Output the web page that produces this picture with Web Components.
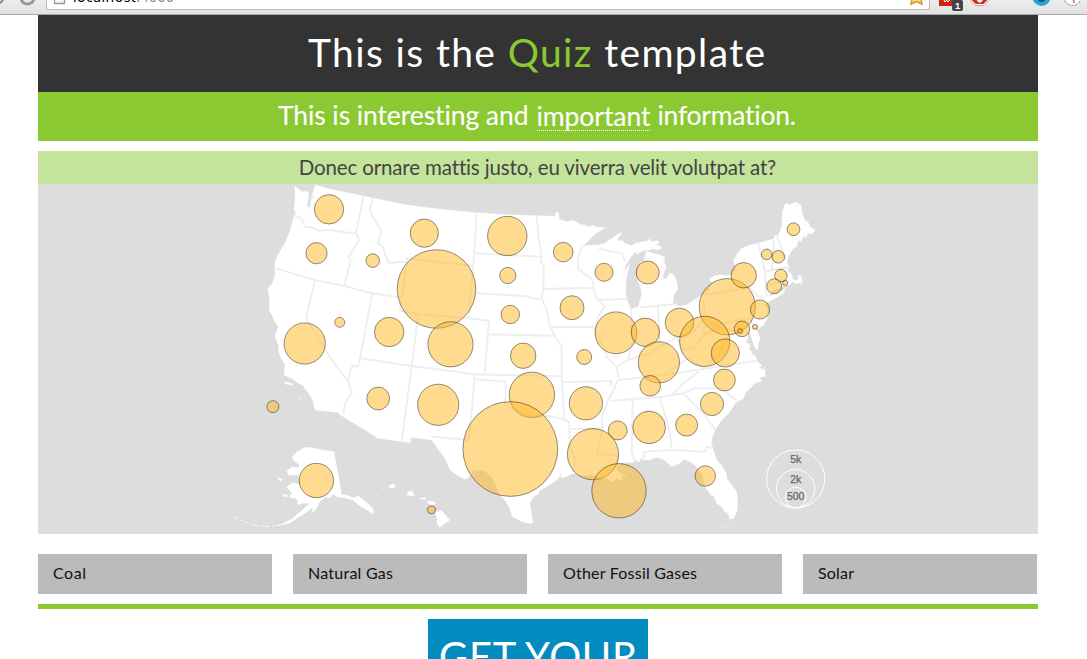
<!DOCTYPE html>
<html lang="en"><head><meta charset="utf-8"><title>Quiz template</title>
<style>html,body{margin:0;height:659px;overflow:hidden;background:#fff;font-family:Lato,"Open Sans",sans-serif;color:#111}</style></head>
<body><quiz-page></quiz-page>
<script>
const define=(name,html,ready)=>{customElements.define(name,class extends HTMLElement{
 constructor(){super();this.attachShadow({mode:'open'}).innerHTML=html;}
 connectedCallback(){if(ready)ready(this,this.shadowRoot);}
});};

// A single line of text whose tracking is set so that it fills the given width.
define('fit-text',`<style>:host{display:inline-block;white-space:pre}span{display:inline-block;white-space:pre}</style><span><slot></slot></span>`,(el,root)=>{
 const s=root.querySelector('span'),n=el.textContent.length,w=+el.getAttribute('width');
 const now=s.getBoundingClientRect().width,ls=(w-now)/(n-1);
 s.style.letterSpacing=ls+'px';s.style.marginRight=-ls+'px';
});

define('browser-bar',`<style>
:host{display:block;height:15px;overflow:hidden;background:linear-gradient(#ededed,#e1e1e1);border-bottom:1px solid #a9a9a9;box-sizing:border-box}
.row{display:flex;height:14px}
.nav{width:46px}.field{width:882px;height:9px;background:#fff;border:1px solid #bdbdbd;border-top:0;border-radius:0 0 3px 3px;display:flex;overflow:hidden;position:relative}
.url{position:absolute;left:26px;top:-13px;font:14px/20px "Noto Sans",sans-serif;color:#000}.url i{font-style:normal;color:#888}
svg{display:block}.tools{width:157px}
</style><div class="row">
<div class="nav"><svg width="46" height="14"><circle cx="-2" cy="-2" r="5" fill="none" stroke="#999" stroke-width="2.5"/><path d="M21.5-1a6 5 0 0 0 12 0" fill="none" stroke="#999" stroke-width="3"/></svg></div>
<div class="field"><svg width="24" height="9"><path d="M7.5-2v5.500h10V-2" fill="#f8f8f8" stroke="#999" stroke-width="1.300"/></svg><div class="url"><fit-text width="101">localhost<i>:4000</i></fit-text></div></div>
<div class="tools"><svg width="157" height="14" viewBox="930 0 157 14"><path d="M939 0h15v6h-15z" fill="#cf2318"/><path d="M944 0l1 2 2-2 1 2 2-2" stroke="#fff" fill="none"/><rect x="952" y="0" width="11" height="11" rx="2" fill="#444"/><text x="955" y="9" font-family="Liberation Sans" font-weight="bold" font-size="9.500" fill="#fff">1</text>
<path d="M970-3v3.500l5 5h9l5-5V-3z" fill="#fff" stroke="#999" stroke-width=".8"/><path d="M971.500-3v3l4 4h8l4-4v-3z" fill="#d92a22"/><path d="M976-1q3.500 7 7 1z" fill="#fff"/>
<circle cx="1041.500" cy="-3" r="9" fill="#21a9cf"/><circle cx="1041.500" cy="-2" r="4" fill="#124e68"/><circle cx="1072.500" cy="-3" r="8.500" fill="#fff" stroke="#6c93ca" stroke-dasharray="3 1"/><path d="M1073-1l1.500 4" stroke="#e36a2c" stroke-width="1.500"/></svg></div></div>
<svg class="star" style="position:absolute;left:908px;top:0" width="18" height="8"><path d="M2.500-2L4-1l-1 5.200 5.500-2.700L14 4.200 13-1l2-2" fill="#f9dc6b" stroke="#cf9430" stroke-width="1.400"/></svg>`);

define('quiz-title',`<style>:host{display:flex;justify-content:center;height:77px;background:#333;color:#fff;font-size:39px;line-height:75px;box-sizing:border-box;padding-right:3px}</style><slot></slot>`);
define('quiz-lead',`<style>:host{display:flex;justify-content:center;height:49px;background:#8ac932;color:#fff;font-size:26.500px;line-height:46px;padding-right:2px;-webkit-text-stroke:.1px #fff;box-sizing:border-box}</style><slot></slot>`);
define('quiz-question',`<style>:host{display:flex;justify-content:center;margin-top:10px;height:33px;background:#c4e39b;color:#444;font-size:20.500px;line-height:33px;padding-right:1px;box-sizing:border-box}</style><slot></slot>`);

// x, y, radius of every bubble, in map coordinates.
const bubbles=[[329,209.300,14.700],[316.500,253.200,10.600],[424.300,233.200,14.100],[372.700,260.600,6.800],[436.500,289,39.300],[507.300,236,19.700],[507.800,275.500,8.100],[563.200,252.100,9.800],[604,272.300,9],[647.700,272.500,11.500],[510.300,314.500,9.200],[572,307.700,12],[339.700,322.300,5],[304.700,343.500,20.600],[389.200,332,14.700],[450.500,344.300,22.600],[523.200,355.700,12.700],[584.200,357,7.500],[616,332.800,20.900],[645.300,332.300,14.200],[679.500,322.500,14.300],[727.300,306.700,28.100],[743.700,275.300,12.700],[704.700,341.300,25.100],[725.300,353,14.100],[658.900,362.300,20.600],[650.200,385.800,10.300],[724.400,380,10.900],[712,404,11.600],[686.600,425.100,11],[649.100,427.400,16.300],[617.700,430.400,9.500],[585.900,403.300,16.600],[531.900,394.800,22.700],[510.300,449,47.400],[593,454.200,25.600],[619,490.800,27.200],[705.300,476,10.200],[438.200,404.800,20.600],[378.200,398.500,11.400],[272.900,406.700,6],[316.400,480.500,17.200],[431.500,509.900,4],[793.500,229.300,6.400],[766.700,254.400,5.300],[778.300,256.800,6.300],[780.900,275.500,6.200],[774.200,286.300,7.500],[785.200,282.900,2.600],[760,309.500,9.600],[755,326.900,2.500],[742,328.900,7.800],[740.100,331,2.400]];
define('bubble-map',`<style>:host{display:block;height:350px;background:#ddd}svg{display:block}.land{fill:#fff;stroke:#fff;stroke-width:.4;stroke-linejoin:round}.border{fill:none;stroke:#eee;stroke-width:1.900;stroke-linejoin:round}.lake{fill:#ddd}.b circle{fill:#ffb721;fill-opacity:.5;stroke:#000;stroke-opacity:.42;stroke-width:1}.legend{fill:none;stroke:#fff}.isle{fill:none;stroke:#fff}text{font:10.500px "Liberation Sans",Arial,sans-serif;fill:#666;stroke:#666;stroke-width:.25px;text-anchor:middle}</style>
<svg width="1000" height="350" viewBox="38 184 1000 350">
<path class="land" d="M295 186L298 189 301.700 191.700 307 191.500 309 194 308 200 307 206 310 207 311 200 312 195 314 190 315.500 185 329 189 363.500 196 372.700 198 406.700 205 440 209.300 476.700 212.700 507 214.700 536.700 215.700 555.300 216.300 556 212 558.300 212.700 559.300 219.300 564 221 568.300 221.700 571 220.500 575 220.700 578 223 581.700 225 584 224.500 587 226.500 589.300 226.700 593.300 225.300 597 227 605 228 598 232 593 236 588 241 583.300 246 592 245 598.300 245 605 243.300 609 240 613.300 237.700 616 235 621.700 232.700 620 236 617 238 618.300 241 622 240.500 626 244 631.700 245.700 636 243 641.700 242.300 647 241 650 239 651 242 656 240.700 659 241 658 244 655 245 660 246 662 248.300 656.700 250 653 248.300 650 250 646 250 640 251.700 637 254 635 252 631.700 256 629 260 626.700 263.300 623.300 271 627 268 630 263.300 628 271 626.300 278 626 286.700 625.300 291 626.700 298.300 630 308.300 634 308.300 638.300 306.700 640 300 641.700 295 641 289 638 280 637.300 275 638 269 640 263 642 261 643 264 645 256.700 646.700 251 651 253 656.700 254 660 255 665 257.300 664 262 666 266.700 664 272 662.700 276.700 664 279 666.700 278.300 669 274 671.700 273.300 675 277 676.700 281.700 677.700 290 675 292 673.300 298.300 672.700 304 675 304 678.300 306 686.700 305 694 300 700 296.700 707 292 713 283.300 710 280.500 710 278.300 716 275.500 720 275 725 275.500 731.700 275 735 271 737 268 733.300 261.700 737 254 741.700 248.300 750 245 758.300 243.300 774 239 775 235 778 236 781.700 226.700 782 218 782.300 211.700 785.700 203.300 790 205 793 203 796.700 202.300 800.700 205 802 213 804.500 220 808 222 810 227 815.300 230 812 234 808 233 806 238 803 236 801 242 798 240 797 246 793.300 248.300 790 253 788.300 257 787 263 789 267 787.500 271 792 275 793 280 798 280 799 276 797 275 801 276 802 282 795 284 794 281 790 284.500 781 287 773 291 767 297 778 293 785 289 784 293 774 299 764 304 768.300 311 767 319 763.300 325 758 329 756 324 756 329 760 338 757 350 754 346 752 339 750 333 747 331 748 338 746 342 750 345 749 349 752 352 751 355 755 356 757 361 762 366 759 368 765 370 765 376 759 378 762 381 755 383 751.700 386.700 746 392 743.300 398.300 735 403.300 731 410 726.700 415 720 422 715 430 711.700 438 711.700 445 716.700 460 722 466 726.700 475 727 479 736.700 491.700 737.500 500 737.300 510 734 518 730 519.300 728 513 725 511.700 721 506 716.700 503.300 714 496 711 495 705 486.700 703 479 701.700 473.300 695 465 689 461 683.300 459.300 680 463 671.700 466.700 668 463 663.300 459.300 658 457.500 653.300 458.300 649 460 643.300 460 641 457 640 461 638.300 462 635 459 634 462 620 463 616 467 618 472 626.700 476.700 621 476 622 481 616.700 478.300 612 482 606.700 478.300 602 478 593.300 475 585 475.500 573.300 473.300 567 476 561 478 561 473 558 479 546.700 486.700 540 490 538 494 533.300 496.700 530 503 531 510 532.700 523.300 526 523 520 520.700 512 516 510 509 506 501.700 500 495 496.700 486.700 491.700 476.700 483.300 470 473.300 470.700 469 477 465 479.300 457 475 450 470 445 458.300 438 449 431.700 440 411 437.300 410.300 442.700 378.300 438.300 340.700 415 338.300 412.300 315 410 313.300 401.700 310 395 305 388.300 304 386 298 383 293.300 379.300 284.300 375 285 365 281 358 278.300 350 279 346 276.700 341 275 335 277 332 278.300 326.700 274 320 272 315 269 310 270 300 267.700 288.300 272 284 275 276 274.700 263 278 255 285 243.300 290 231 294 216.700 296 213 294 210 295 200z"/>
<path class="lake" d="M309 188l3-2-1 7 3 4-4 5 1 5-4 2 1-6zM663 258l1 4 2-3z" opacity=".5"/>
<path class="border" d="M295 216l6.700 2 3.300 8.700 8 1 5.300 3L330 230l26.700 4M363.500 196L356 233l3.300 7-11 17.300 2.400 2.700-6.400 26M275.700 268.300L315 280l29.300 6 28 7.300 24.400 3.700h4.500M372.700 198L370 210l2 6 4.700 7 5 8.700-4 11.600 5.600 3.400 1.700 7 3.300 8.600 5 .7 4-1 9.400-.3.600-3.700-7.300 52.700 19 3.600 50 4 20 2.400-4.300 52.300M406.700 258.300l66.600 7.700M315 280l-9 38.300 25.700 41.700 16.600 21.700M372.300 293.300L360 358.300l-2.300 8.400-5-1-2.700 4.300-1.700 11.700 3.400 11.600-6.700 10-1.700 11M360.700 358.300L411.700 366l63.300 8.300 86.700 2M418.300 314.300L411.700 366l-10 75.700M476.700 212.700l-2.400 40.600-2.600 26.700-3.400 38.300M474.300 253.300l67.400 3.400M475.700 293.300L525 296l8.300 2.700 8.400.7M536.700 215.700l2 22 3 19-1 5 3.300 5-.7 21.600-1.600 10 5 11.700 3.300 16.700 5 9.300 6.700 10.700V376M543.300 289l49.400-1.300M550 327.300l41.700-.6 4 4M582.700 246l-4.400 10.700-.6 11.600 15 11.700.6 9 3.400 9.300 8.300 8.400-8.300 11.600-1.700 11.700 8.300 16.700 3.400 10 10 10 1.600 11.300M597 300l31.300-1M598.300 248.300l10 2.400 13.400 2.600 3.300 8.400M488.300 334.300l66.700 1.400M475 379.300l31 2.400-1 23.300 15 6.700 8 4 12 1 8-1 8.700 2 11.600 3M475 374.300L469 440l-37.300-3.300M563.300 382.300l48.400-1.300-1.700 5.700M561.700 376l2.600 44 4.700 1.700 1 25 5 13.300-2.300 11.700M570 429l31.700-.7M618.300 380l-5 10-5 10-6.600 16.700 1 13.300-6 24 20 1 1.300 11M618 380l45.300-5 93.400-14.300M611.700 400.700l50-4 21.600-3.400 11.700-5 26.700 0 15 12.400M683.300 393.300l20 20 11.700 16M673.300 393.300l10-10 15-11.600M632.700 399.300l-1 52 2.300 9M660 397.700l10 35.600 1.700 16.700-28.400 1.700 1 7M671.700 450l33.300 1.700 1.700-5 5 1.600M631 308l2.300 32-5.300 20-10 6M628 360l12-4 10-2 8-7 10-4 8-6 10 0 10-8 8-12 0-17M657.700 306l2.300 37M640 307.500l35-3.500M705 295l45-7.700 6.700 7.700 8.300 3.300M704 326.700l46-8.400 4 11M704 327v9l8-4 8-6 8 4 8 1M676 337l8 13 12-4 6-10 12-8M663 375l15-10 10-7 15 10 15-12 10-20M758.300 243.300l6.700 28.400 1.700 25M774 240l-2.300 30M765 271.700l23-4.700M776.700 235l8.300 25M766 285l20.700-4.300"/>
<path class="land" d="M292.300 456.700L297 452 304 448 310 447.300 318.300 449.300 334 451.700 341.700 495 347 495 353.300 498.300 358 496 366 502 373.300 509 373 514 367 510 360 506 353 500 345 498 338 497 333 494 330 498 326 497 320 501 316 509 312 513 313 507 304 514 296.700 518.300 290 523 280 525 292 519 300 512 310 503.300 303 503 298.300 505 297 499 289 497 292 493 286.700 486.700 293.300 482.700 301 485 298.300 475 288.300 475 287 471 292 467 298.300 468 300 465 294 461zM277 477l6 3-3 1zM283 494l5 2-4 1z"/>
<path class="isle" stroke-dasharray="4 2 2 3" d="M280 525q-22 5-46-8"/>
<path class="land" d="M389 486l3-2 3 1-1 3-4 0zM383 489l1-1 0 1zM407.500 492l4-1 3 4-3 1-4-1zM420 498l6 0 0 1-6 0zM427 502l4-1 5 2-3 2-4-1zM435 511.700l6.700-1 8 9.300-9.700 7-3-3 0-6zM285 382l8 2 0 1-8-1zM299 396l2 4-1-1zM303 394l2 2z"/>
<path class="isle" stroke-width=".6" stroke-dasharray="3 2" d="M722 527q9-2 13-7M753 353l5 9M764 366l1 9M800 284l5-1"/>
<g class="b"></g><g class="legend"><circle cx="795.700" cy="479" r="29.100"/><circle cx="795.700" cy="488.700" r="19.200"/><circle cx="795.700" cy="497.600" r="10.300"/></g><text x="795.700" y="463.300">5k</text><text x="795.700" y="483.300">2k</text><text x="795.700" y="500.300">500</text></svg>`,(el,root)=>{
 root.querySelector('.b').innerHTML=bubbles.map(([x,y,r])=>`<circle cx="${x}" cy="${y}" r="${r}"/>`).join('');
});
define('answer-option',`<style>:host{display:block;width:234px;height:40px;line-height:38px;padding-left:15px;box-sizing:border-box;background:#bbb;font-size:16px;color:#111}</style><slot></slot>`);
define('cta-button',`<style>:host{display:block;width:220px;height:70px;margin:10px 0 0 390px;background:#028bbf;color:#fff;font-size:40px;line-height:74px;padding-left:11px;box-sizing:border-box}</style><slot></slot>`);
define('quiz-page',`<style>:host{display:block;height:659px;overflow:hidden}main{width:1000px;margin-left:38px}em{font-style:normal;color:#8ac932}.dot{border-bottom:1px dotted #fff;height:38px;line-height:48px}.answers{display:flex;gap:21px;margin-top:20px}.rule{height:5px;background:#8ac932;margin-top:10px}.l{white-space:pre}</style>
<browser-bar></browser-bar><main>
<quiz-title><fit-text width="457">This is the <em>Quiz</em> template</fit-text></quiz-title>
<quiz-lead><fit-text width="251">This is interesting and</fit-text><span class="l" style="width:8px"></span><span class="dot"><fit-text width="114">important</fit-text></span><span class="l" style="width:7px"></span><fit-text width="139">information.</fit-text></quiz-lead>
<quiz-question><fit-text width="477">Donec ornare mattis justo, eu viverra velit volutpat at?</fit-text></quiz-question>
<bubble-map></bubble-map>
<div class="answers"><answer-option><fit-text width="33">Coal</fit-text></answer-option><answer-option><fit-text width="85">Natural Gas</fit-text></answer-option><answer-option><fit-text width="134">Other Fossil Gases</fit-text></answer-option><answer-option><fit-text width="36">Solar</fit-text></answer-option></div>
<div class="rule"></div><cta-button><fit-text width="198">GET YOUR</fit-text></cta-button></main>`);
</script></body></html>
